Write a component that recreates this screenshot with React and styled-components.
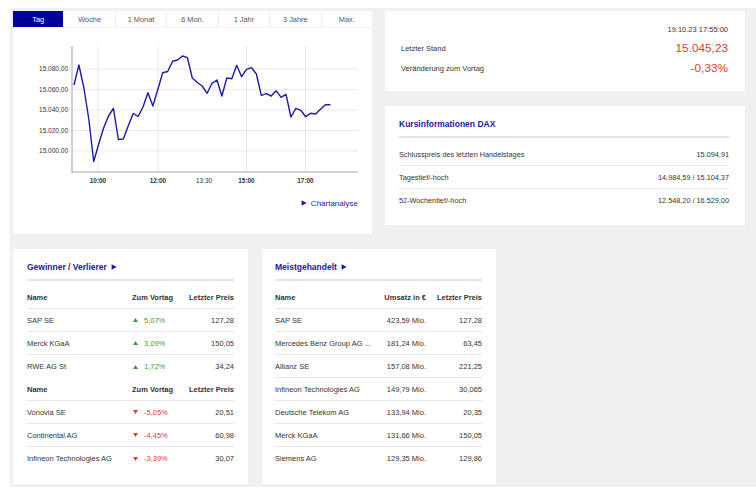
import React from 'react';
import styled, { createGlobalStyle } from 'styled-components';

const GlobalStyle = createGlobalStyle`
  body {
    margin: 0;
    background: #fff;
    font-family: "Liberation Sans", Arial, sans-serif;
    color: #333;
  }
`;

const NAVY = '#1a1a9c';
const RED = '#ea3a2e';
const GREEN = '#3d9b3d';

const Page = styled.div`
  margin: 8px 0 0 10px;
  padding: 3px 0 3px 3px;
  height: 479px;
  box-sizing: border-box;
  background: #f0f0f0;
`;

const TopRow = styled.div`
  display: flex;
  gap: 13px;
  align-items: flex-start;
`;

const Panel = styled.div`
  background: #fff;
  box-sizing: border-box;
  width: ${props => props.$w}px;
  height: ${props => props.$h}px;
`;

const ChartPanel = styled(Panel)`
  display: flex;
  flex-direction: column;
`;

const Tabs = styled.div`
  display: flex;
  height: 17px;
`;

const Tab = styled.div`
  flex: 1;
  display: flex;
  align-items: center;
  justify-content: center;
  font-size: 7.4px;
  color: ${props => (props.$active ? '#fff' : '#555')};
  background: ${props => (props.$active ? '#00009a' : '#fff')};
  border-left: ${props => (props.$first ? 'none' : '1px solid #ececec')};
  border-bottom: 1px solid #f2f2f2;
`;

const LinkRow = styled.div`
  display: flex;
  justify-content: flex-end;
  align-items: center;
  gap: 4px;
  margin-top: 7px;
  padding-right: 14px;
  height: 12px;
  font-size: 8px;
  color: ${NAVY};
`;

const SideCol = styled.div`
  display: flex;
  flex-direction: column;
  gap: 15px;
`;

const QuoteBox = styled(Panel)`
  padding: 13px 17px 0 16px;
`;

const Stamp = styled.div`
  text-align: right;
  font-size: 7.5px;
  line-height: 12px;
  height: 12px;
  margin-bottom: 2px;
`;

const QuoteRow = styled.div`
  display: flex;
  justify-content: space-between;
  align-items: center;
  height: 20px;
  font-size: 7.5px;
  color: #333;
`;

const BigValue = styled.span`
  font-size: 11.8px;
  color: ${RED};
`;

const ListPanel = styled(Panel)`
  padding: 0 ${props => props.$pr}px 0 ${props => props.$pl}px;
`;

const Title = styled.div`
  display: flex;
  align-items: center;
  gap: 4px;
  padding: 12px 0 6px;
  line-height: 12px;
  font-size: 8.5px;
  font-weight: bold;
  color: ${NAVY};
  border-bottom: 2px solid #e4e4e4;
  margin-bottom: 5px;
`;

const InfoRow = styled.div`
  display: flex;
  justify-content: space-between;
  align-items: center;
  height: 23px;
  box-sizing: border-box;
  font-size: 7.3px;
  color: #333;
  border-bottom: ${props => (props.$line ? '1px solid #e8e8e8' : 'none')};
`;

const BottomRow = styled.div`
  display: flex;
  gap: 14px;
  margin-top: 15px;
`;

const Row = styled.div`
  display: grid;
  grid-template-columns: ${props => props.$cols};
  align-items: center;
  height: 23px;
  box-sizing: border-box;
  font-size: 7.5px;
  color: #333;
  font-weight: ${props => (props.$head ? 'bold' : 'normal')};
  border-bottom: ${props => (props.$line ? '1px solid #e8e8e8' : 'none')};
`;

const Cell = styled.div`
  white-space: nowrap;
  overflow: hidden;
  color: #333;
  text-align: ${props => props.$align || 'left'};
`;

const Change = styled.div`
  display: flex;
  align-items: center;
  gap: 6px;
  padding-left: 1px;
  color: ${props => (props.$up ? GREEN : RED)};
`;

const Arrow = ({ size = 6, color = NAVY }) => (
  <svg width={size} height={size} viewBox="0 0 10 10">
    <path d="M1 0.5 L9.5 5 L1 9.5 Z" fill={color} />
  </svg>
);

const Tri = ({ up }) => (
  <svg width="5" height="4" viewBox="0 0 10 8">
    {up ? <path d="M5 0 L10 8 L0 8 Z" fill={GREEN} /> : <path d="M0 0 L10 0 L5 8 Z" fill={RED} />}
  </svg>
);

const prices = [
  85, 65, 88, 119, 161.5, 144, 128, 116, 108.3, 139.5, 139, 126, 113.5, 116.5, 107, 92.7,
  106, 89.5, 72.7, 71.5, 61.3, 60, 56, 57.7, 78, 82.5, 86, 93.3, 83.3, 80, 96, 78, 78.7,
  65.3, 76.7, 69.3, 67.7, 74, 95.3, 93.7, 96, 90.7, 97.3, 94.3, 117, 108.3, 110.3, 116.7,
  113.3, 114, 109.3, 104.7, 104.7
];

const yTicks = [
  { y: 69, label: '15.080,00' },
  { y: 89.5, label: '15.060,00' },
  { y: 110, label: '15.040,00' },
  { y: 130.5, label: '15.020,00' },
  { y: 151, label: '15.000,00' }
];

const xTicks = [
  { x: 98, label: '10:00', bold: true, grid: true },
  { x: 158, label: '12:00', bold: true, grid: true },
  { x: 204, label: '13:30', bold: false, grid: false },
  { x: 246.5, label: '15:00', bold: true, grid: true },
  { x: 305.5, label: '17:00', bold: true, grid: true }
];

const Chart = () => {
  const points = prices.map((y, i) => `${(74 + i * 4.93).toFixed(1)},${y}`).join(' ');
  return (
    <svg width="359" height="162" viewBox="13 28 359 162" style={{ display: 'block' }}>
      {yTicks.map(t => (
        <g key={t.label}>
          <line x1="72" x2="358" y1={t.y} y2={t.y} stroke="#e3e3e3" strokeWidth="0.8" />
          <text x="68" y={t.y + 2.3} fontSize="6.5" textAnchor="end" fill="#333" fontFamily="Liberation Sans, Arial, sans-serif">
            {t.label}
          </text>
        </g>
      ))}
      {xTicks.map(t => (
        <g key={t.label}>
          {t.grid && <line x1={t.x} x2={t.x} y1="46" y2="172" stroke="#e3e3e3" strokeWidth="0.8" />}
          <text
            x={t.x}
            y="183.3"
            fontSize="6.4"
            textAnchor="middle"
            fill="#333"
            fontWeight={t.bold ? 'bold' : 'normal'}
            fontFamily="Liberation Sans, Arial, sans-serif"
          >
            {t.label}
          </text>
        </g>
      ))}
      <line x1="72" x2="72" y1="46" y2="172.5" stroke="#9a9a9a" strokeWidth="0.9" />
      <line x1="71.5" x2="358" y1="172" y2="172" stroke="#9a9a9a" strokeWidth="0.9" />
      <polyline points={points} fill="none" stroke="#1c1c9e" strokeWidth="1.4" strokeLinejoin="round" />
    </svg>
  );
};

const tabs = ['Tag', 'Woche', '1 Monat', '6 Mon.', '1 Jahr', '3 Jahre', 'Max.'];

const gainers = [
  { name: 'SAP SE', change: '5,07%', price: '127,28' },
  { name: 'Merck KGaA', change: '3,09%', price: '150,05' },
  { name: 'RWE AG St', change: '1,72%', price: '34,24' }
];

const losers = [
  { name: 'Vonovia SE', change: '-5,05%', price: '20,51' },
  { name: 'Continental AG', change: '-4,45%', price: '60,98' },
  { name: 'Infineon Technologies AG', change: '-3,39%', price: '30,07' }
];

const mostTraded = [
  { name: 'SAP SE', volume: '423,59 Mio.', price: '127,28' },
  { name: 'Mercedes Benz Group AG ...', volume: '181,24 Mio.', price: '63,45' },
  { name: 'Allianz SE', volume: '157,08 Mio.', price: '221,25' },
  { name: 'Infineon Technologies AG', volume: '149,79 Mio.', price: '30,065' },
  { name: 'Deutsche Telekom AG', volume: '133,94 Mio.', price: '20,35' },
  { name: 'Merck KGaA', volume: '131,66 Mio.', price: '150,05' },
  { name: 'Siemens AG', volume: '129,35 Mio.', price: '129,86' }
];

const info = [
  { label: 'Schlusspreis des letzten Handelstages', value: '15.094,91' },
  { label: 'Tagestief/-hoch', value: '14.984,59 / 15.104,37' },
  { label: '52-Wochentief/-hoch', value: '12.548,20 / 16.529,00' }
];

const GV_COLS = '105px 1fr 60px';
const MG_COLS = '97px 1fr 56px';

const MoverRows = ({ items, up, lastLine }) => (
  <>
    <Row $cols={GV_COLS} $head $line>
      <Cell>Name</Cell>
      <Cell>Zum Vortag</Cell>
      <Cell $align="right">Letzter Preis</Cell>
    </Row>
    {items.map((item, i) => (
      <Row key={item.name} $cols={GV_COLS} $line={i < items.length - 1 || lastLine}>
        <Cell>{item.name}</Cell>
        <Change $up={up}>
          <Tri up={up} />
          {item.change}
        </Change>
        <Cell $align="right">{item.price}</Cell>
      </Row>
    ))}
  </>
);

export default function App() {
  return (
    <>
      <GlobalStyle />
      <Page>
        <TopRow>
          <ChartPanel $w={359} $h={223}>
            <Tabs>
              {tabs.map((t, i) => (
                <Tab key={t} $active={i === 0} $first={i === 0}>
                  {t}
                </Tab>
              ))}
            </Tabs>
            <Chart />
            <LinkRow>
              <Arrow size={6} />
              Chartanalyse
            </LinkRow>
          </ChartPanel>
          <SideCol>
            <QuoteBox $w={360} $h={80}>
              <Stamp>19.10.23 17:55:00</Stamp>
              <QuoteRow>
                <span>Letzter Stand</span>
                <BigValue>15.045,23</BigValue>
              </QuoteRow>
              <QuoteRow>
                <span>Veränderung zum Vortag</span>
                <BigValue>-0,33%</BigValue>
              </QuoteRow>
            </QuoteBox>
            <ListPanel $w={360} $h={119} $pl={14} $pr={16}>
              <Title>Kursinformationen DAX</Title>
              {info.map((r, i) => (
                <InfoRow key={r.label} $line={i < info.length - 1}>
                  <span>{r.label}</span>
                  <span>{r.value}</span>
                </InfoRow>
              ))}
            </ListPanel>
          </SideCol>
        </TopRow>
        <BottomRow>
          <ListPanel $w={235} $h={235} $pl={14} $pr={14}>
            <Title>
              Gewinner / Verlierer
              <Arrow size={6} />
            </Title>
            <MoverRows items={gainers} up />
            <MoverRows items={losers} />
          </ListPanel>
          <ListPanel $w={234} $h={235} $pl={13} $pr={14}>
            <Title>
              Meistgehandelt
              <Arrow size={6} />
            </Title>
            <Row $cols={MG_COLS} $head $line>
              <Cell>Name</Cell>
              <Cell $align="right">Umsatz in €</Cell>
              <Cell $align="right">Letzter Preis</Cell>
            </Row>
            {mostTraded.map((item, i) => (
              <Row key={item.name} $cols={MG_COLS} $line={i < mostTraded.length - 1}>
                <Cell>{item.name}</Cell>
                <Cell $align="right">{item.volume}</Cell>
                <Cell $align="right">{item.price}</Cell>
              </Row>
            ))}
          </ListPanel>
        </BottomRow>
      </Page>
    </>
  );
}
